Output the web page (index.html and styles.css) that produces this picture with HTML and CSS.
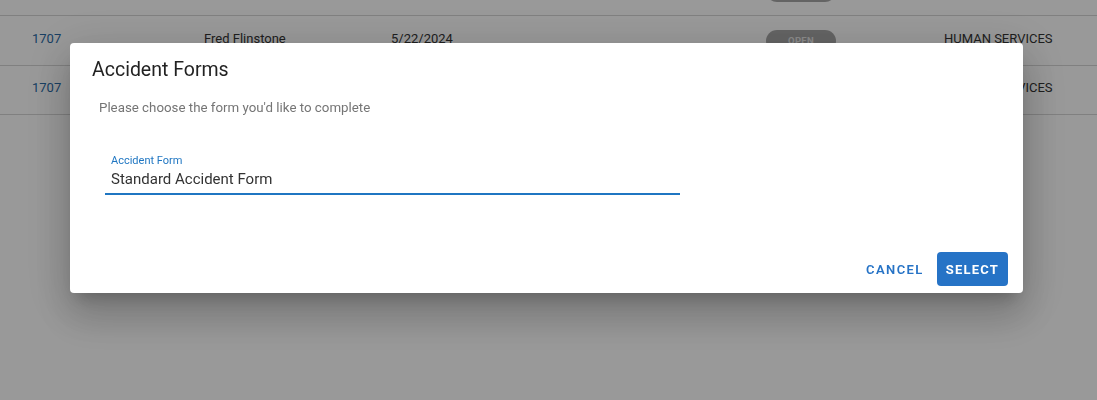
FILE: index.html
```html
<!DOCTYPE html>
<html>
<head>
<meta charset="utf-8">
<link rel="stylesheet" href="styles.css">
</head>
<body>
<div class="page">
  <div class="table">
    <div class="row row-partial">
      <span class="id"></span><span></span><span></span><span class="pillcell"><span class="pill"></span></span><span></span>
    </div>
    <div class="row">
      <span class="id">1707</span><span>Fred Flinstone</span><span>5/22/2024</span><span class="pillcell"><span class="pill">OPEN</span></span><span>HUMAN SERVICES</span>
    </div>
    <div class="row">
      <span class="id">1707</span><span>Fred Flinstone</span><span>5/22/2024</span><span class="pillcell"><span class="pill">OPEN</span></span><span>HUMAN SERVICES</span>
    </div>
  </div>
</div>
<div class="backdrop">
  <div class="dialog">
    <h2 class="title">Accident Forms</h2>
    <p class="subtitle">Please choose the form you'd like to complete</p>
    <div class="field">
      <label class="label">Accident Form</label>
      <div class="value">Standard Accident Form</div>
    </div>
    <div class="actions">
      <button class="btn btn-text">CANCEL</button>
      <button class="btn btn-primary">SELECT</button>
    </div>
  </div>
</div>
</body>
</html>
```
FILE: styles.css
```css
html, body {
  margin: 0;
  padding: 0;
  background: #fff;
  font-family: Roboto, "Liberation Sans", sans-serif;
  overflow: hidden;
  height: 400px;
}
.page {
  height: 400px;
  overflow: hidden;
}
.table {
  margin-top: -34px;
}
.row {
  display: grid;
  grid-template-columns: 172px 187px 375px 178px 1fr;
  padding-left: 32px;
  height: 50px;
  box-sizing: border-box;
  align-items: center;
  border-bottom: 1px solid #d6d6d6;
  font-size: 13px;
  color: #333;
}
.row:last-child { height: 49px; }
.row > span {
  line-height: 16px;
  padding-bottom: 4px;
}
.row .id { color: #2a6aa5; }
.pillcell { display: flex; }
.pill {
  display: inline-flex;
  align-items: center;
  justify-content: center;
  width: 70px;
  height: 22px;
  border-radius: 11px;
  background: #a7a7a7;
  color: #e8e8e8;
  font-size: 9.5px;
  font-weight: 700;
  letter-spacing: 0.3px;
}
.row > .pillcell { padding-bottom: 0; }
.backdrop {
  position: fixed;
  inset: 0;
  background: rgba(0, 0, 0, 0.4);
  display: flex;
  align-items: flex-start;
  justify-content: center;
  padding-top: 43px;
  padding-right: 4px;
  box-sizing: border-box;
}
.dialog {
  width: 953px;
  height: 250px;
  background: #fff;
  border-radius: 4px;
  box-sizing: border-box;
  display: flex;
  flex-direction: column;
  padding: 15px 15px 7px 22px;
  box-shadow: 0px 11px 15px -7px rgba(0,0,0,0.2), 0px 24px 38px 3px rgba(0,0,0,0.14), 0px 9px 46px 8px rgba(0,0,0,0.12);
}
.title {
  margin: 0;
  font-size: 19.5px;
  line-height: 24px;
  font-weight: 400;
  color: #222;
}
.subtitle {
  margin: 17px 0 0 7px;
  font-size: 13.3px;
  line-height: 18px;
  color: #757575;
}
.field {
  margin: 37px 0 0 13px;
  width: 575px;
  border-bottom: 2px solid #1f76c2;
  padding: 0 0 3px 6px;
  box-sizing: border-box;
}
.label {
  display: block;
  font-size: 11px;
  line-height: 14px;
  color: #1f76c2;
}
.value {
  font-size: 15px;
  line-height: 22px;
  color: #333;
}
.actions {
  margin-top: auto;
  display: flex;
  justify-content: flex-end;
  align-items: center;
  gap: 5px;
}
.btn {
  font-family: Roboto, "Liberation Sans", sans-serif;
  font-size: 13px;
  font-weight: 700;
  letter-spacing: 1.2px;
  height: 34px;
  border: none;
  border-radius: 4px;
  cursor: pointer;
}
.btn-text {
  background: transparent;
  color: #2673c6;
  padding: 0 8px;
  font-weight: 600;
  letter-spacing: 1.4px;
}
.btn-primary {
  background: #2673c6;
  color: #fff;
  padding: 0 9px;
  min-width: 70px;
}
```
